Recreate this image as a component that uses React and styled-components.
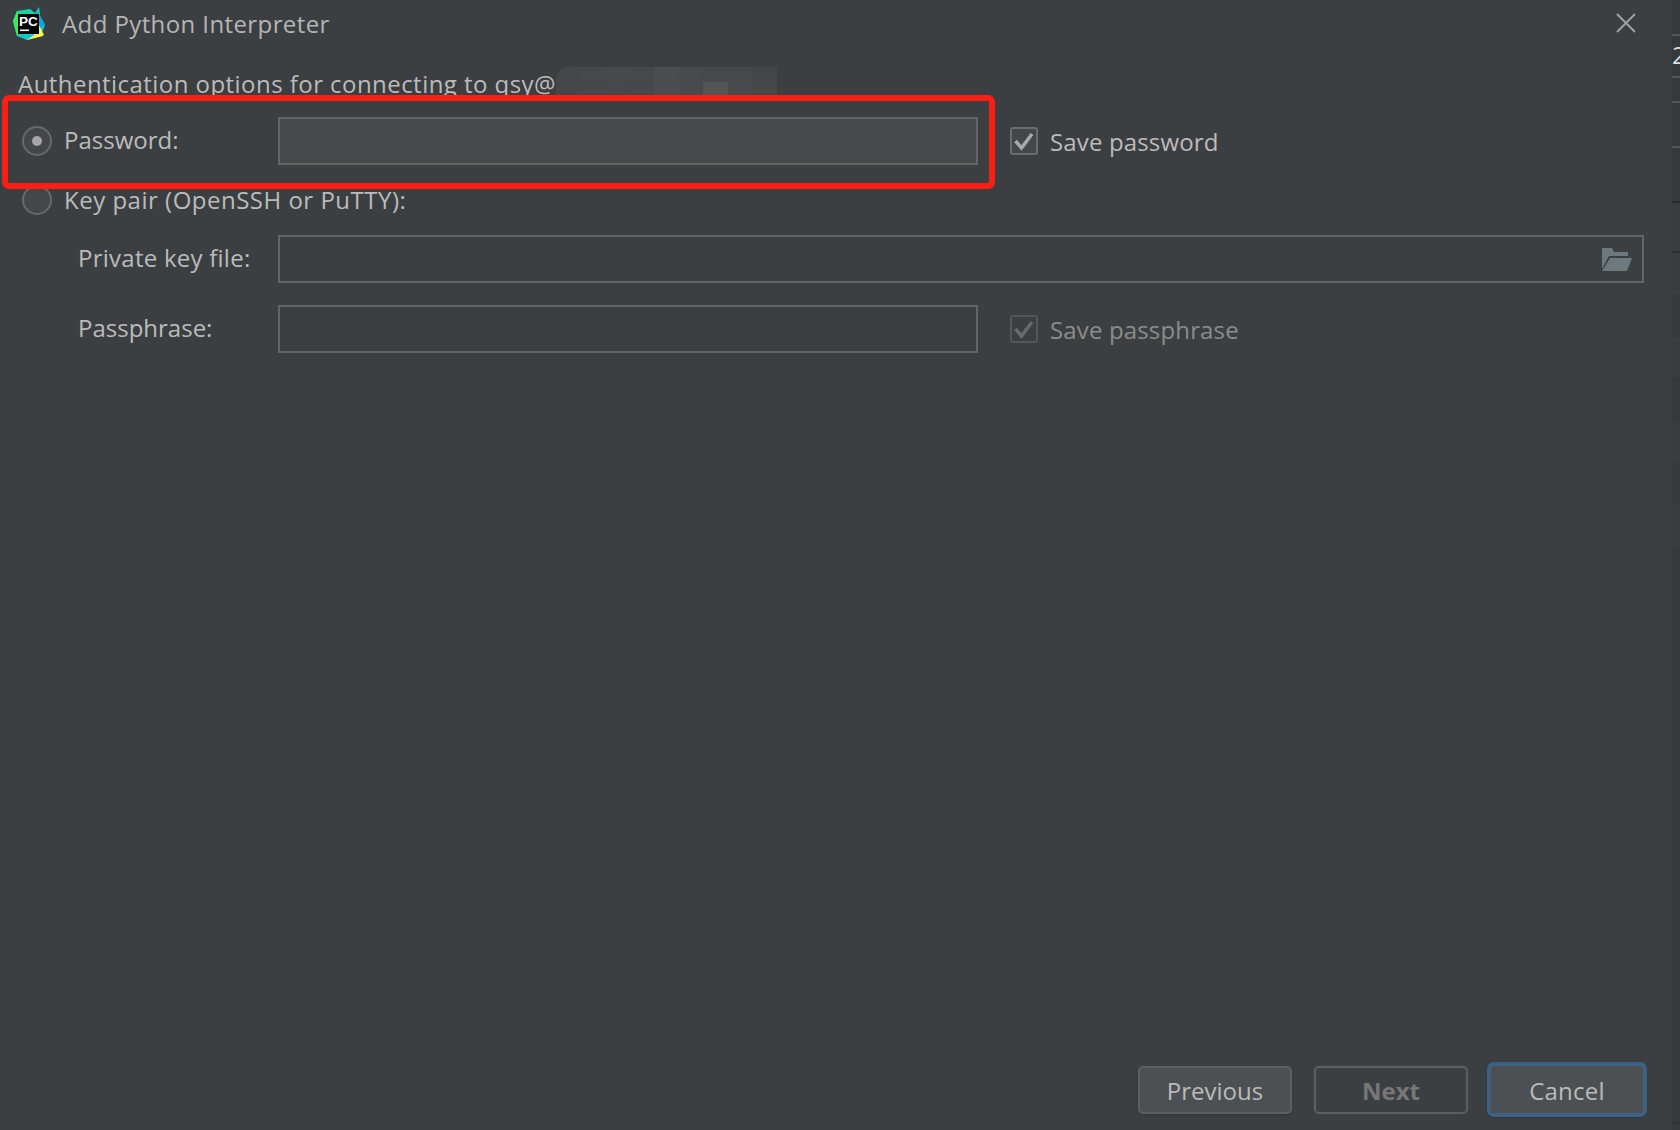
import styled, { createGlobalStyle } from "styled-components";

const GlobalStyle = createGlobalStyle`
  html, body {
    margin: 0;
    padding: 0;
    background: #3c3f41;
  }
  * {
    box-sizing: border-box;
  }
`;

const Page = styled.div`
  display: flex;
  width: 1680px;
  height: 1130px;
  overflow: hidden;
  background: #3c3f41;
  color: #bbbbbb;
  font-family: "Open Sans", "Liberation Sans", sans-serif;
  font-size: 24px;
`;

const Dialog = styled.div`
  display: flex;
  flex-direction: column;
  width: 1672px;
  height: 100%;
`;

const TitleBar = styled.div`
  display: flex;
  align-items: center;
  height: 46px;
  padding: 0 36px 0 13px;
`;

const Title = styled.div`
  flex: 1;
  margin-left: 17px;
  color: #b5b5b5;
  letter-spacing: 0.4px;
`;

const AuthLine = styled.div`
  display: flex;
  align-items: flex-start;
  height: 49px;
  padding: 21px 0 0 18px;
  overflow: hidden;
  line-height: 33px;
  letter-spacing: 0.45px;
`;

const Blur = styled.div`
  display: grid;
  grid-template-columns: repeat(9, 24.5px);
  grid-auto-rows: 15px;
  border-radius: 14px 0 0 0;
  overflow: hidden;
`;

const BlurCell = styled.div`
  background: ${(p) => p.$color};
`;

const PasswordRow = styled.div`
  display: flex;
  align-items: center;
`;

const Highlight = styled.div`
  position: relative;
  z-index: 1;
  display: flex;
  align-items: center;
  width: 993px;
  height: 94px;
  margin-left: 2px;
  padding: 0 0 2px 14px;
  background: #3c3f41;
  border: 6px solid #fb1e14;
  border-radius: 7px;
`;

const Radio = styled.div`
  display: flex;
  align-items: center;
  justify-content: center;
  flex: none;
  width: 30px;
  height: 30px;
  border: 2px solid #666a6c;
  border-radius: 50%;
  background: #43474a;
`;

const RadioDot = styled.div`
  width: 10px;
  height: 10px;
  border-radius: 50%;
  background: #a6a6a6;
`;

const RadioLabel = styled.div`
  width: 214px;
  margin-left: 12px;
  padding-bottom: ${(p) => p.$lift}px;
  white-space: nowrap;
  letter-spacing: ${(p) => p.$spacing || 0}px;
`;

const KeyRow = styled.div`
  display: flex;
  align-items: center;
  height: 22px;
  padding-left: 22px;
`;

const FieldRow = styled.div`
  display: flex;
  align-items: center;
  margin-top: ${(p) => p.$top}px;
  padding-left: 78px;
`;

const FieldLabel = styled.div`
  width: 200px;
  padding-bottom: 3px;
  letter-spacing: ${(p) => p.$spacing || 0}px;
`;

const Field = styled.div`
  display: flex;
  align-items: center;
  justify-content: flex-end;
  flex: none;
  width: ${(p) => p.$width}px;
  height: 48px;
  padding-right: 10px;
  border: 2px solid #646464;
  background: ${(p) => (p.$filled ? "#45494a" : "transparent")};
`;

const CheckGroup = styled.div`
  display: flex;
  align-items: center;
  margin-left: ${(p) => p.$left}px;
  padding-bottom: ${(p) => p.$lift || 0}px;
  color: ${(p) => (p.$disabled ? "#8c8c8c" : "#bbbbbb")};
  letter-spacing: 0.15px;
  white-space: nowrap;
`;

const CheckBox = styled.div`
  display: flex;
  align-items: center;
  justify-content: center;
  width: 28px;
  height: 28px;
  margin-right: 12px;
  border: 2px solid ${(p) => (p.$disabled ? "#545658" : "#6b6b6b")};
  border-radius: 3px;
  background: ${(p) => (p.$disabled ? "#3c3f41" : "#43474a")};
  color: ${(p) => (p.$disabled ? "#6a6a6a" : "#a9a9a9")};
`;

const Spacer = styled.div`
  flex: 1;
`;

const Footer = styled.div`
  display: flex;
  align-items: center;
  justify-content: flex-end;
  padding: 0 25px 13px 0;
`;

const Button = styled.div`
  display: flex;
  align-items: center;
  justify-content: center;
  width: 154px;
  height: 48px;
  margin-left: 22px;
  padding-top: 1px;
  border: 2px solid #5e6060;
  border-radius: 5px;
  background: #4c5052;
  box-shadow: 0 1px 2px rgba(0, 0, 0, 0.18);
`;

const NextButton = styled(Button)`
  background: #3c3f41;
  box-shadow: none;
  color: #777777;
  font-weight: 700;
`;

const CancelButton = styled(Button)`
  width: 160px;
  height: 55px;
  margin-left: 19px;
  border: 4px solid #3d6185;
  border-radius: 7px;
  letter-spacing: 0.25px;
`;

const Strip = styled.div`
  display: flex;
  flex-direction: column;
  flex: 1;
  overflow: hidden;
  background: #36393b;
  color: #d6dde4;
  line-height: 1;
`;

const StripCell = styled.div`
  flex: none;
  height: ${(p) => p.$height}px;
  padding-top: ${(p) => p.$pad || 0}px;
  margin-top: ${(p) => p.$gap || 0}px;
  background: ${(p) => p.$fill || "transparent"};
  border-bottom: 2px solid ${(p) => p.$line || "transparent"};
  overflow: hidden;
`;

const StripFoot = styled.div`
  margin-top: auto;
  height: 8px;
  border-top: 2px solid #2f3133;
`;

const blurColors = [
  "#45484a", "#46494b", "#474a4b", "#46494a", "#4a4c4d", "#484b4c", "#46494b", "#45494a", "#434648",
  "#43474a", "#44484a", "#46494a", "#45484a", "#4b4d4e", "#484b4c", "#535455", "#484b4d", "#454849",
];

function PyCharmLogo() {
  return (
    <svg width="32" height="33" viewBox="0 0 32 33" style={{ flex: "none" }}>
      <defs>
        <linearGradient id="pc-left" x1="0" y1="0" x2="1" y2="1">
          <stop offset="0" stopColor="#21d789" />
          <stop offset="1" stopColor="#07c3f2" />
        </linearGradient>
      </defs>
      <polygon points="4,4 17,2 22,6 26,0 28,14 32,18 28,28 31,28 14,33 4,29 0,14" fill="url(#pc-left)" />
      <polygon points="24,4 32,17 27,22 24,14" fill="#09a7dd" />
      <polygon points="14,33 28,23 30,29" fill="#fcf84a" />
      <polygon points="26,18 31,28 20,31" fill="#fcf84a" />
      <polygon points="0,14 4,4 8,18 4,29" fill="#3bea62" />
      <rect x="5" y="7" width="21" height="20" fill="#000000" />
      <text x="6" y="19" fill="#ffffff" fontSize="13.5" fontWeight="700" fontFamily="'Liberation Sans', sans-serif">
        PC
      </text>
      <rect x="7" y="22.5" width="9" height="1.6" fill="#ffffff" />
    </svg>
  );
}

function CloseIcon() {
  return (
    <svg width="20" height="20" viewBox="0 0 20 20">
      <path d="M1 1 L19 19 M19 1 L1 19" stroke="#a3a3a3" strokeWidth="1.8" fill="none" />
    </svg>
  );
}

function FolderIcon() {
  return (
    <svg width="30" height="23" viewBox="0 0 30 23">
      <path d="M0 0 H10 L12 4 H26 V8 H7 L0 21 Z" fill="#6d797e" />
      <path d="M8 10 H30 L25 23 H0 Z" fill="#6d797e" />
    </svg>
  );
}

function CheckMark() {
  return (
    <svg width="24" height="24" viewBox="0 0 24 24" style={{ flex: "none" }}>
      <path d="M3.5 12 L9.5 19 L20 5" stroke="currentColor" strokeWidth="3.5" fill="none" />
    </svg>
  );
}

function App() {
  return (
    <>
      <GlobalStyle />
      <Page>
        <Dialog>
          <TitleBar>
            <PyCharmLogo />
            <Title>Add Python Interpreter</Title>
            <CloseIcon />
          </TitleBar>
          <AuthLine>
            Authentication options for connecting to qsy@
            <Blur>
              {blurColors.map((color, i) => (
                <BlurCell key={i} $color={color} />
              ))}
            </Blur>
          </AuthLine>
          <PasswordRow>
            <Highlight>
              <Radio>
                <RadioDot />
              </Radio>
              <RadioLabel $lift={4}>Password:</RadioLabel>
              <Field $width={700} $filled />
            </Highlight>
            <CheckGroup $left={15} $lift={2}>
              <CheckBox>
                <CheckMark />
              </CheckBox>
              Save password
            </CheckGroup>
          </PasswordRow>
          <KeyRow>
            <Radio />
            <RadioLabel $lift={2} $spacing={0.5}>Key pair (OpenSSH or PuTTY):</RadioLabel>
          </KeyRow>
          <FieldRow $top={24}>
            <FieldLabel $spacing={0.25}>Private key file:</FieldLabel>
            <Field $width={1366}>
              <FolderIcon />
            </Field>
          </FieldRow>
          <FieldRow $top={22}>
            <FieldLabel>Passphrase:</FieldLabel>
            <Field $width={700} />
            <CheckGroup $left={32} $disabled>
              <CheckBox $disabled>
                <CheckMark />
              </CheckBox>
              Save passphrase
            </CheckGroup>
          </FieldRow>
          <Spacer />
          <Footer>
            <Button>Previous</Button>
            <NextButton>Next</NextButton>
            <CancelButton>Cancel</CancelButton>
          </Footer>
        </Dialog>
        <Strip>
          <StripCell $height={36} $line="#55585a" />
          <StripCell $height={42} $line="#55585a" $pad={7}>2</StripCell>
          <StripCell $height={25} $line="#55585a" />
          <StripCell $height={45} $line="#55585a" />
          <StripCell $height={55} $line="#2b2d2e" />
          <StripCell $height={50} $line="#2b2d2e" $fill="#3a3d3f" />
          <StripCell $height={42} $fill="#3a3d3f" />
          <StripCell $height={40} $gap={42} $fill="#3a3d3f" />
          <StripCell $height={40} $gap={45} $fill="#3a3d3f" />
          <StripCell $height={43} $gap={42} $fill="#3a3d3f" />
          <StripFoot />
        </Strip>
      </Page>
    </>
  );
}

export default App;
